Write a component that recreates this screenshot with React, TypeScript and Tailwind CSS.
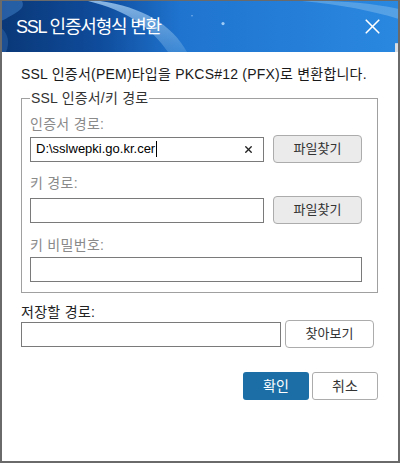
import { X } from "lucide-react";

const font = { fontFamily: '"Liberation Sans", "Noto Sans CJK KR", sans-serif' };

const TitleArt = () => (
    <svg
        className="absolute inset-0 w-full h-full"
        viewBox="0 0 396 52"
        preserveAspectRatio="none"
    >
        <defs>
            <linearGradient id="tb" x1="0" y1="0" x2="1" y2="0">
                <stop offset="0" stopColor="#0a3878" />
                <stop offset="0.25" stopColor="#0f4c9c" />
                <stop offset="0.45" stopColor="#1f74cf" />
                <stop offset="1" stopColor="#2a88e0" />
            </linearGradient>
            <linearGradient id="band" x1="0" y1="0" x2="0" y2="1">
                <stop offset="0" stopColor="#a8d0f4" stopOpacity="0.8" />
                <stop offset="1" stopColor="#6aa8e0" stopOpacity="0.4" />
            </linearGradient>
        </defs>
        <rect width="396" height="52" fill="url(#tb)" />
        <path d="M98 0 C 140 6, 170 24, 185 52 L 166 52 C 150 28, 126 10, 86 0 Z" fill="url(#band)" />
        <path d="M300 0 C 340 4, 370 10, 396 18 L 396 8 C 370 2, 340 0, 320 0 Z" fill="#8cc0ee" opacity="0.45" />
        <path d="M0 0 L 20 0 C 24 8, 14 12, 4 18 L 0 20 Z" fill="#3b78c0" opacity="0.6" />
        <path d="M0 28 C 6 34, 8 42, 4 52 L 0 52 Z" fill="#3a74b8" opacity="0.4" />
        <circle cx="221" cy="23" r="1.6" fill="#bfe0ff" opacity="0.8" />
        <circle cx="190" cy="15" r="0.8" fill="#bfe0ff" opacity="0.6" />
        <rect x="393" y="43" width="3" height="9" fill="#d8dde3" />
    </svg>
);

const Label = ({ children, className = "" }: { children: React.ReactNode; className?: string }) => (
    <div className={`text-[14px] leading-[20px] text-[#8a8a8a] tracking-[0.3px] ${className}`}>{children}</div>
);

const GrayButton = ({ children }: { children: React.ReactNode }) => (
    <button className="w-[89px] h-[28px] rounded-[4px] border border-[#acacac] bg-[#ebebeb] text-[13px] text-[#333]">
        {children}
    </button>
);

const App = () => {
    return (
        <div
            className="w-[400px] h-[463px] bg-white border-x-2 border-b-2 border-t border-[#6a6a6a] flex flex-col overflow-hidden"
            style={font}
        >
            <header className="relative h-[51px] shrink-0 flex items-center justify-between pl-[14px] pr-[12px]">
                <TitleArt />
                <span className="relative text-white text-[18px] tracking-[-1.2px] leading-none">
                    SSL 인증서형식 변환
                </span>
                <X className="relative text-white mr-[1px]" size={25} strokeWidth={1.6} />
            </header>

            <main className="flex flex-col pl-[19px] pr-[20px]">
                <p className="mt-[12px] text-[14px] leading-[20px] text-[#1a1a1a] tracking-[0.22px]">
                    SSL 인증서(PEM)타입을 PKCS#12 (PFX)로 변환합니다.
                </p>

                <fieldset className="mt-[5px] border border-[#a0a0a0] pl-[8px] pr-[15px] pb-[10px]">
                    <legend className="text-[14px] leading-[18px] text-[#333] px-[1px] tracking-[0.2px]">SSL 인증서/키 경로</legend>

                    <Label className="mt-[7px]">인증서 경로:</Label>
                    <div className="mt-[1px] flex items-center justify-between">
                        <div className="w-[234px] h-[25px] border border-[#7a7a7a] flex items-center pl-[5px] pr-[9px]">
                            <span className="text-[13px] text-black">D:\sslwepki.go.kr.cer</span>
                            <span className="w-px h-[16px] bg-black ml-[1px]" />
                            <X className="ml-auto text-[#222]" size={11} strokeWidth={3} />
                        </div>
                        <GrayButton>파일찾기</GrayButton>
                    </div>

                    <Label className="mt-[10px]">키 경로:</Label>
                    <div className="mt-[3px] flex items-center justify-between">
                        <div className="w-[234px] h-[25px] border border-[#7a7a7a]" />
                        <GrayButton>파일찾기</GrayButton>
                    </div>

                    <Label className="mt-[11px]">키 비밀번호:</Label>
                    <div className="mt-[2px] h-[25px] border border-[#7a7a7a]" />
                </fieldset>

                <div className="mt-[11px] text-[14px] leading-[16px] text-[#222] tracking-[0.3px]">저장할 경로:</div>
                <div className="flex items-center w-[353px] justify-between">
                    <div className="w-[260px] h-[25px] border border-[#7a7a7a]" />
                    <button className="w-[89px] h-[28px] rounded-[4px] border border-[#acacac] bg-white text-[13px] text-[#333]">
                        찾아보기
                    </button>
                </div>

                <div className="mt-[24px] flex justify-end gap-[3px]">
                    <button className="w-[66px] h-[28px] rounded-[3px] bg-[#1b6fa6] text-white text-[14px]">
                        확인
                    </button>
                    <button className="w-[66px] h-[28px] rounded-[3px] border border-[#acacac] bg-white text-[14px] text-[#333]">
                        취소
                    </button>
                </div>
            </main>
        </div>
    );
};

export default App;
